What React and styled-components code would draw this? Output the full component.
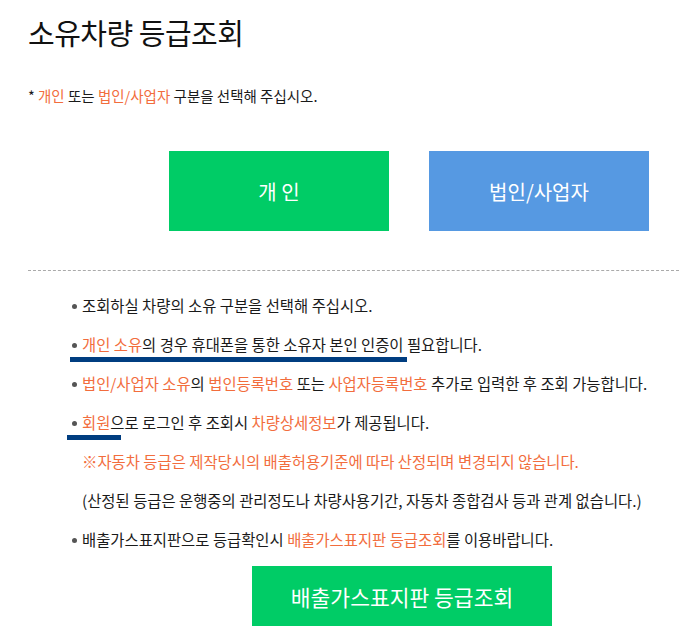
import React from "react";
import styled, { createGlobalStyle } from "styled-components";

const GlobalStyle = createGlobalStyle`
    body {
        margin: 0;
        background: #fff;
        font-family: "Noto Sans CJK KR", "Noto Sans", sans-serif;
        color: #1a1a1a;
    }
`

const Page = styled.div`
    width: 679px;
    height: 630px;
    overflow: hidden;
    padding: 8px 0 0 28px;
    box-sizing: border-box;
`

const Title = styled.h2`
    margin: 0;
    font-size: 29px;
    font-weight: 400;
    line-height: 48px;
    color: #111;
    letter-spacing: -0.5px;
`

const Guide = styled.p`
    margin: 30px 0 0;
    font-size: 14.5px;
    line-height: 20px;
`

const Hi = styled.span`
    color: #f26d3d;
`

const ButtonRow = styled.div`
    display: flex;
    gap: 40px;
    margin: 45px 0 0 141px;
`

const TypeButton = styled.button`
    width: 220px;
    height: 80px;
    border: 0;
    background: ${props => props.color};
    color: #fff;
    font-family: inherit;
    font-size: 20px;
    cursor: pointer;
`

const Divider = styled.hr`
    margin: 39px 0 0;
    border: 0;
    border-top: 1px dashed #aaa;
`

const List = styled.ul`
    list-style: none;
    margin: 24px 0 0;
    padding: 0 0 0 54px;
    font-size: 15.4px;
`

const Item = styled.li`
    position: relative;
    line-height: 20px;
    margin-bottom: 19px;
    white-space: nowrap;
    color: ${props => props.warn ? "#f26d3d" : "#1a1a1a"};

    &::before {
        content: ${props => props.plain ? "none" : "''"};
        position: absolute;
        left: -10px;
        top: 9px;
        width: 5px;
        height: 5px;
        border-radius: 50%;
        background: #555;
    }
`

const Mark = styled.span`
    position: absolute;
    left: ${props => props.left}px;
    top: 23px;
    width: ${props => props.width}px;
    height: 5px;
    background: #003d80;
`

const CheckButton = styled.button`
    display: block;
    width: 300px;
    height: 60px;
    margin: -2px 0 0 224px;
    border: 0;
    background: #00cc66;
    color: #fff;
    font-family: inherit;
    font-size: 21.5px;
    cursor: pointer;
`

const App = () => {
    return (
        <Page>
            <GlobalStyle />
            <Title>소유차량 등급조회</Title>
            <Guide>* <Hi>개인</Hi> 또는 <Hi>법인/사업자</Hi> 구분을 선택해 주십시오.</Guide>
            <ButtonRow>
                <TypeButton color="#00cc66">개 인</TypeButton>
                <TypeButton color="#5699e2">법인/사업자</TypeButton>
            </ButtonRow>
            <Divider />
            <List>
                <Item>조회하실 차량의 소유 구분을 선택해 주십시오.</Item>
                <Item>
                    <Hi>개인 소유</Hi>의 경우 휴대폰을 통한 소유자 본인 인증이 필요합니다.
                    <Mark left={-12} width={337} />
                </Item>
                <Item>
                    <Hi>법인/사업자 소유</Hi>의 <Hi>법인등록번호</Hi> 또는 <Hi>사업자등록번호</Hi> 추가로 입력한 후 조회 가능합니다.
                </Item>
                <Item>
                    <Hi>회원</Hi>으로 로그인 후 조회시 <Hi>차량상세정보</Hi>가 제공됩니다.
                    <Mark left={-15} width={54} />
                </Item>
                <Item plain warn>※자동차 등급은 제작당시의 배출허용기준에 따라 산정되며 변경되지 않습니다.</Item>
                <Item plain>(산정된 등급은 운행중의 관리정도나 차량사용기간, 자동차 종합검사 등과 관계 없습니다.)</Item>
                <Item>배출가스표지판으로 등급확인시 <Hi>배출가스표지판 등급조회</Hi>를 이용바랍니다.</Item>
            </List>
            <CheckButton>배출가스표지판 등급조회</CheckButton>
        </Page>
    );
}

export default App;
